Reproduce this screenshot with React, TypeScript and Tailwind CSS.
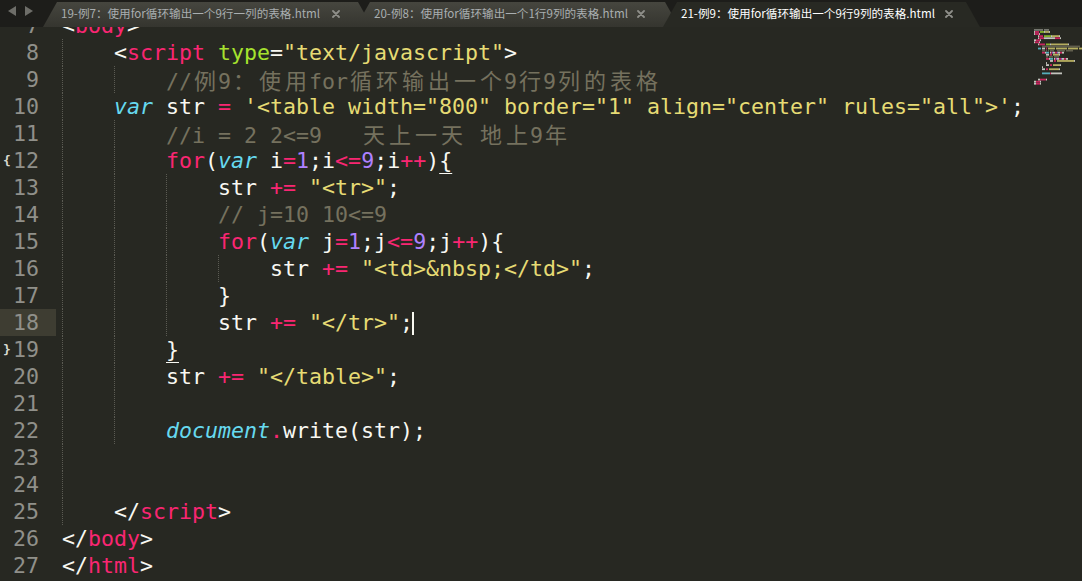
import React from "react";

type K = "W" | "P" | "G" | "Y" | "C" | "N" | "M" | "U" | "R";
type T = [string, K];
type L = { indent: number; guides: number; toks: T[]; fold?: string; hl?: boolean; cursor?: boolean };

const CLS: Record<K, string> = {
  W: "text-[#f8f8f2]",
  P: "text-[#f92672]",
  G: "text-[#a6e22e]",
  Y: "text-[#e6db74]",
  C: "text-[#66d9ef] italic",
  N: "text-[#ae81ff]",
  M: "text-[#75715e]",
  U: "text-[#f8f8f2] underline decoration-1 underline-offset-[5px]",
  R: "text-[#90908a]",
};
const HEX: Record<K, string> = {
  W: "#f8f8f2",
  P: "#f92672",
  G: "#a6e22e",
  Y: "#e6db74",
  C: "#66d9ef",
  N: "#ae81ff",
  M: "#75715e",
  U: "#f8f8f2",
  R: "#90908a",
};

const pre: L[] = [
  { indent: 0, guides: 0, toks: [["<!DOCTYPE html>", "R"]] },
  { indent: 0, guides: 0, toks: [["<", "W"], ["html", "P"], [" ", "W"], ["lang", "G"], ["=", "W"], ['"en"', "Y"], [">", "W"]] },
  { indent: 0, guides: 0, toks: [["<", "W"], ["head", "P"], [">", "W"]] },
  { indent: 1, guides: 1, toks: [["<", "W"], ["meta", "P"], [" ", "W"], ["charset", "G"], ["=", "W"], ['"UTF-8"', "Y"], [">", "W"]] },
  { indent: 1, guides: 1, toks: [["<", "W"], ["title", "P"], [">", "W"], ["Document", "W"], ["</", "W"], ["title", "P"], [">", "W"]] },
  { indent: 0, guides: 0, toks: [["</", "W"], ["head", "P"], [">", "W"]] },
];

const forTok = (v: string): T[] => [
  ["for", "P"], ["(", "W"], ["var", "C"], [" " + v, "W"], ["=", "P"], ["1", "N"], [";" + v, "W"], ["<=", "P"], ["9", "N"], [";" + v, "W"], ["++", "P"], [")", "W"],
];

const lines: L[] = [
  { indent: 0, guides: 0, toks: [["<", "W"], ["body", "P"], [">", "W"]] },
  { indent: 1, guides: 1, toks: [["<", "W"], ["script", "P"], [" ", "W"], ["type", "G"], ["=", "W"], ['"text/javascript"', "Y"], [">", "W"]] },
  { indent: 2, guides: 2, toks: [["//例9：使用for循环输出一个9行9列的表格", "M"]] },
  { indent: 1, guides: 1, toks: [["var", "C"], [" str ", "W"], ["=", "P"], [" ", "W"], [`'<table width="800" border="1" align="center" rules="all">'`, "Y"], [";", "W"]] },
  { indent: 2, guides: 2, toks: [["//i = 2 2<=9   天上一天 地上9年", "M"]] },
  { indent: 2, guides: 2, fold: "{", toks: [...forTok("i"), ["{", "U"]] },
  { indent: 3, guides: 3, toks: [["str ", "W"], ["+=", "P"], [" ", "W"], ['"<tr>"', "Y"], [";", "W"]] },
  { indent: 3, guides: 3, toks: [["// j=10 10<=9", "M"]] },
  { indent: 3, guides: 3, toks: [...forTok("j"), ["{", "W"]] },
  { indent: 4, guides: 4, toks: [["str ", "W"], ["+=", "P"], [" ", "W"], ['"<td>&nbsp;</td>"', "Y"], [";", "W"]] },
  { indent: 3, guides: 3, toks: [["}", "W"]] },
  { indent: 3, guides: 3, hl: true, cursor: true, toks: [["str ", "W"], ["+=", "P"], [" ", "W"], ['"</tr>"', "Y"], [";", "W"]] },
  { indent: 2, guides: 2, fold: "}", toks: [["}", "U"]] },
  { indent: 2, guides: 2, toks: [["str ", "W"], ["+=", "P"], [" ", "W"], ['"</table>"', "Y"], [";", "W"]] },
  { indent: 2, guides: 2, toks: [] },
  { indent: 2, guides: 2, toks: [["document", "C"], [".", "P"], ["write(str);", "W"]] },
  { indent: 1, guides: 1, toks: [] },
  { indent: 1, guides: 1, toks: [] },
  { indent: 1, guides: 1, toks: [["</", "W"], ["script", "P"], [">", "W"]] },
  { indent: 0, guides: 0, toks: [["</", "W"], ["body", "P"], [">", "W"]] },
  { indent: 0, guides: 0, toks: [["</", "W"], ["html", "P"], [">", "W"]] },
];

const CJK = /[\u3000-\u303f\u3400-\u9fff\uff00-\uffef]/;

function Chunks({ text }: { text: string }) {
  const out: React.ReactNode[] = [];
  let buf = "";
  [...text].forEach((ch, i) => {
    if (CJK.test(ch)) {
      if (buf) {
        out.push(<React.Fragment key={"b" + i}>{buf}</React.Fragment>);
        buf = "";
      }
      out.push(
        <span key={i} className="inline-block w-[26px] text-center text-[22px] font-['Noto_Sans_CJK_SC',sans-serif]">
          {ch}
        </span>
      );
    } else buf += ch;
  });
  if (buf) out.push(<React.Fragment key="end">{buf}</React.Fragment>);
  return <>{out}</>;
}

function Minimap() {
  const all = [...pre, ...lines];
  const rects: { x: number; y: number; w: number; c: string }[] = [];
  all.forEach((l, li) => {
    let col = l.indent * 4;
    l.toks.forEach(([t, k]) => {
      for (const ch of t) {
        const w = CJK.test(ch) ? 2 : 1;
        if (ch !== " ") rects.push({ x: col, y: li * 2.07, w, c: HEX[k] });
        col += w;
      }
    });
  });
  return (
    <svg width="48" height="60" viewBox="0 0 48 60">
      {rects.map((r, i) => (
        <rect key={i} x={r.x} y={r.y} width={r.w} height={1.8} fill={r.c} opacity={0.75} />
      ))}
    </svg>
  );
}

function CloseX() {
  return (
    <svg width="8" height="8" viewBox="0 0 8 8" className="shrink-0">
      <path d="M1 1 L7 7 M7 1 L1 7" stroke="#8e8e89" strokeWidth="1.8" strokeLinecap="round" />
    </svg>
  );
}

const tabFont = "font-['Noto_Sans_CJK_SC','Noto_Sans',sans-serif] text-[11.6px] whitespace-nowrap";

export default function App() {
  return (
    <div className="w-[1082px] h-[581px] bg-[#272822] overflow-hidden flex flex-col">
      {/* Tab bar */}
      <div className="h-[27px] shrink-0 bg-[#1d1d1a] flex items-end">
        <div className="w-[43px] h-full shrink-0 flex items-start pt-[6px] pl-[7px] gap-[7px]">
          <svg width="10" height="10" viewBox="0 0 10 10">
            <path d="M9 0 L9 10 L1 5 Z" fill="#6e6e69" />
          </svg>
          <svg width="10" height="10" viewBox="0 0 10 10">
            <path d="M1 0 L1 10 L9 5 Z" fill="#6e6e69" />
          </svg>
        </div>
        <div className="h-[25px] w-[329px] shrink-0 flex items-center justify-between pl-[18px] pr-[32px] pb-[1px] bg-linear-to-b from-[#46463f] to-[#35352f] text-[#a9aeb0] [clip-path:polygon(0_100%,14px_0,calc(100%_-_14px)_0,100%_100%)]">
          <span className={tabFont}>19-例7：使用for循环输出一个9行一列的表格.html</span>
          <CloseX />
        </div>
        <div className="h-[25px] w-[323px] shrink-0 -ml-[16px] flex items-center justify-between pl-[18px] pr-[34px] pb-[1px] bg-linear-to-b from-[#46463f] to-[#35352f] text-[#a9aeb0] [clip-path:polygon(0_100%,14px_0,calc(100%_-_14px)_0,100%_100%)]">
          <span className={tabFont}>20-例8：使用for循环输出一个1行9列的表格.html</span>
          <CloseX />
        </div>
        <div className="h-[25px] w-[317px] shrink-0 -ml-[16px] flex items-center justify-between pl-[18px] pr-[27px] pb-[1px] bg-[#282923] text-white [clip-path:polygon(0_100%,14px_0,calc(100%_-_14px)_0,100%_100%)]">
          <span className={tabFont}>21-例9：使用for循环输出一个9行9列的表格.html</span>
          <CloseX />
        </div>
      </div>

      {/* Editor */}
      <div className="flex-1 flex overflow-hidden font-['DejaVu_Sans_Mono',monospace] text-[21.6px] leading-[27px]">
        {/* Gutter */}
        <div className="w-[56px] shrink-0 overflow-hidden">
          <div className="-mt-[15px]">
            {lines.map((l, i) => (
              <div key={i} className={`h-[27px] flex items-center justify-between pl-[3px] pr-[17px] ${l.hl ? "bg-[#3e3d32]" : ""}`}>
                <span className="text-[13px] font-bold text-[#d8d8d0] w-[8px]">{l.fold ?? ""}</span>
                <span className="text-[#90908a]">{i + 7}</span>
              </div>
            ))}
          </div>
        </div>
        {/* Code */}
        <div className="flex-1 overflow-hidden pl-[6px]">
          <div className="-mt-[15px]">
            {lines.map((l, i) => (
              <div key={i} className="h-[27px] flex items-stretch whitespace-pre">
                {Array.from({ length: l.indent }).map((_, g) => (
                  <span
                    key={g}
                    className={`w-[52px] shrink-0 ${g < l.guides ? "border-l border-dotted border-[#5b5b53]" : ""}`}
                  />
                ))}
                <span className="whitespace-pre">
                  {l.toks.map(([t, k], j) => (
                    <span key={j} className={CLS[k]}>
                      <Chunks text={t} />
                    </span>
                  ))}
                  {l.cursor && <span className="inline-block w-[2px] h-[23px] -ml-[1px] align-[-5px] bg-[#f8f8f0]" />}
                </span>
              </div>
            ))}
          </div>
        </div>
        {/* Minimap */}
        <div className="w-[48px] shrink-0 pt-[2px]">
          <Minimap />
        </div>
      </div>
    </div>
  );
}
